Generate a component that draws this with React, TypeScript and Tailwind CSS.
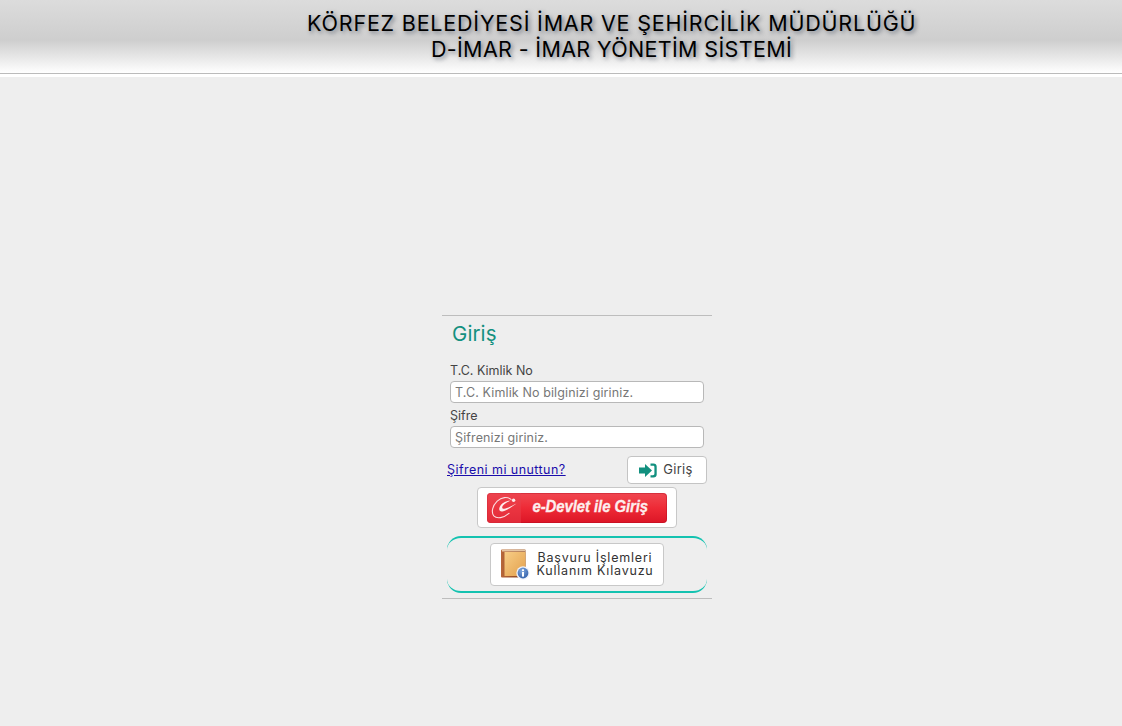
import React from "react";

function EDevlet() {
  return (
    <div className="flex h-[30px] w-[180px] overflow-hidden rounded-[4px] bg-gradient-to-b from-[#f04650] via-[#ee2a36] to-[#dc1426] shadow-[inset_0_0_0_1px_rgba(170,10,30,0.35)]">
      <div className="flex h-full w-[34px] items-center justify-center bg-[#e8404c]/50">
        <svg width="28" height="25" viewBox="0 0 28 25" fill="none">
          <path d="M21 4.4C17.4 1.4 11.6 2 7.2 6.2C2.4 10.8 1 17.4 3.8 20.8C6.8 24.2 13.6 23 19 18.4" stroke="#fbdcdf" strokeWidth="1.1" strokeLinecap="round" />
          <path d="M20.5 5.8C16.2 5.6 11.6 8.2 9.8 11.8C8.4 14.8 9.6 16.8 12.4 16.4C16.4 15.8 21.6 12.2 26.5 8.6C22 10.8 17.2 13.6 14.4 13.8C12.2 14 11.6 12.6 12.8 10.8C14.2 8.8 17 6.9 20.5 5.8Z" fill="#fdeced" />
          <circle cx="23.6" cy="5.2" r="1.7" fill="#fdeced" />
        </svg>
      </div>
      <div className="flex-1 pl-[13px] text-[17px] font-bold italic leading-[28px] tracking-[-0.1px] text-[#fdeeee] font-['Liberation_Sans',sans-serif] [-webkit-text-stroke:0.3px_#fdeeee] [transform:scaleX(0.88)] origin-left">
        e-Devlet ile Giriş
      </div>
    </div>
  );
}

function BookIcon() {
  return (
    <svg width="30" height="31" viewBox="0 0 30 31" className="shrink-0">
      <defs>
        <linearGradient id="pg" x1="0" y1="0" x2="1" y2="1">
          <stop offset="0" stopColor="#f7cd86" />
          <stop offset="1" stopColor="#e3a04c" />
        </linearGradient>
        <linearGradient id="sp" x1="0" y1="0" x2="1" y2="0">
          <stop offset="0" stopColor="#b8673a" />
          <stop offset="1" stopColor="#7e3c18" />
        </linearGradient>
        <radialGradient id="bd" cx="0.4" cy="0.3" r="0.8">
          <stop offset="0" stopColor="#7fa6dc" />
          <stop offset="1" stopColor="#2f5da8" />
        </radialGradient>
      </defs>
      <rect x="1" y="0.5" width="24.5" height="28" rx="1" fill="url(#sp)" />
      <rect x="2" y="0.5" width="23.5" height="2" fill="#e6c6a4" />
      <rect x="4.5" y="3" width="21" height="24" fill="url(#pg)" />
      <circle cx="23" cy="24" r="6.7" fill="#eef2fb" />
      <circle cx="23" cy="24" r="5.4" fill="url(#bd)" />
      <rect x="22" y="23" width="2" height="4.6" fill="#fff" />
      <rect x="22" y="20.3" width="2" height="1.8" fill="#fff" />
    </svg>
  );
}

export default function App() {
  return (
    <div className="min-h-screen bg-[#eeeeee] font-['Inter',sans-serif] text-[#333]">
      <header className="h-[77px] border-b-[3px] border-white bg-white">
        <div className="h-[74px] border-b border-[#bbbbbb] bg-gradient-to-b from-[#dcdcdc] via-[#cecece] via-[55%] to-white pt-[10px] text-center">
          <h1 className="ml-[307px] w-[609px] text-[21.5px] font-normal leading-[26px] text-black [text-shadow:2px_2px_4px_rgba(30,40,60,0.55)]">
            <span className="block whitespace-nowrap tracking-[0.8px]">KÖRFEZ BELEDİYESİ İMAR VE ŞEHİRCİLİK MÜDÜRLÜĞÜ</span>
            <span className="block whitespace-nowrap tracking-[0.35px]">D-İMAR - İMAR YÖNETİM SİSTEMİ</span>
          </h1>
        </div>
      </header>

      <main className="pt-[238px] pl-[442px]">
        <section className="h-[284px] w-[270px] border-y border-[#bdbdbd]">
          <h2 className="pt-[4px] pl-[10px] text-[20.5px] leading-[28px] tracking-[0.1px] text-[#14907f]">Giriş</h2>

          <form className="px-[8px] pt-[14px]">
            <label className="block text-[12.5px] leading-[17px] text-[#444]">T.C. Kimlik No</label>
            <input
              readOnly
              placeholder="T.C. Kimlik No bilginizi giriniz."
              className="mt-[2px] block h-[22px] w-[254px] rounded-[4px] border border-[#b8b8b8] bg-white px-[4px] text-[12.5px] tracking-[0.12px] placeholder:text-[#777]"
            />
            <label className="mt-[4px] block text-[12.5px] leading-[17px] text-[#444]">Şifre</label>
            <input
              readOnly
              placeholder="Şifrenizi giriniz."
              className="mt-[2px] block h-[22px] w-[254px] rounded-[4px] border border-[#b8b8b8] bg-white px-[4px] text-[12.5px] tracking-[0.12px] placeholder:text-[#777]"
            />
          </form>

          <div className="mt-[8px] flex items-center justify-between px-[5px]">
            <a href="#" className="text-[12.5px] tracking-[0.45px] text-[#1a0dab] underline">Şifreni mi unuttun?</a>
            <button className="flex h-[28px] w-[80px] items-center justify-center gap-[6px] rounded-[4px] border border-[#c4c4c4] bg-white pr-[2px] text-[13px] tracking-[0.3px] text-[#444]">
              <svg width="18" height="15" viewBox="0 0 18 15" fill="#12907f">
                <path d="M0 4.5H6V1L13 7.5L6 14V10.5H0Z" />
                <path d="M11.5 0.5H14.5C16.4 0.5 17.7 1.8 17.7 3.6V11.4C17.7 13.2 16.4 14.5 14.5 14.5H11.5V12.2H14C14.9 12.2 15.4 11.7 15.4 10.8V4.2C15.4 3.3 14.9 2.8 14 2.8H11.5Z" />
              </svg>
              Giriş
            </button>
          </div>

          <div className="mt-[3px] flex justify-center">
            <div className="flex h-[41px] w-[200px] items-center justify-center rounded-[4px] border border-[#c8c8c8] bg-white">
              <EDevlet />
            </div>
          </div>

          <div className="mx-[5px] mt-[8px] flex h-[57px] items-center justify-center rounded-[14px] border-y-2 border-[#14c2b0]">
            <button className="flex h-[43px] w-[174px] items-center justify-center gap-[6px] rounded-[4px] border border-[#c8c8c8] bg-white pb-[1px] text-[12.5px] leading-[13px] tracking-[0.8px] text-[#333]">
              <BookIcon />
              <span className="whitespace-nowrap text-center">Başvuru İşlemleri<br />Kullanım Kılavuzu</span>
            </button>
          </div>
        </section>
      </main>
    </div>
  );
}
